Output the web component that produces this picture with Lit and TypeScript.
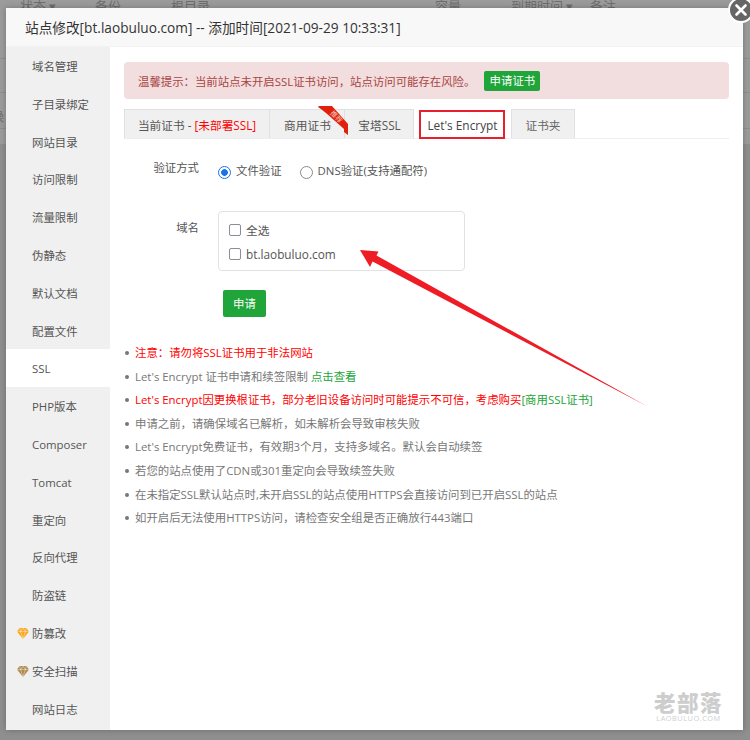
import { LitElement, html, css, svg } from "lit";
import { customElement } from "lit/decorators.js";

const MENU = ["域名管理","子目录绑定","网站目录","访问限制","流量限制","伪静态","默认文档","配置文件","SSL","PHP版本","Composer","Tomcat","重定向","反向代理","防盗链","防篡改","安全扫描","网站日志"];

const gem = (color: string) => html`<svg class="gem" viewBox="0 0 12 11"><path d="M2.6 0h6.8L12 3.4 6 11 0 3.4z" fill=${color}/><path d="M0 3.6h12M3.6 3.6 6 10.6 8.4 3.6M2.8.2l.8 3.4L6 .2l2.4 3.4.8-3.4" fill="none" stroke="#fff" stroke-width=".6" opacity=".7"/></svg>`;

@customElement("app-root")
export class AppRoot extends LitElement {
  static styles = css`
    :host { display: block; width: 750px; height: 740px; position: relative; overflow: hidden; background: #8f8f8f;
      font-family: "Open Sans", "Noto Sans CJK SC", sans-serif; font-size: 11.4px; color: #555; }
    .bg { position: absolute; inset: 0; color: #6e6e6e; font-size: 13px; }
    .bg span { position: absolute; top: -3px; line-height: 18px; }
    .bg i { position: absolute; left: 0; right: 0; height: 1px; background: #8e8e8e; }
    .bg .top { position: absolute; left: 0; right: 0; top: 0; height: 145px; background: #9b9b9b; }
    .dialog { position: absolute; left: 6px; top: 8px; width: 737px; height: 722px; background: #fff; display: flex; flex-direction: column; box-shadow: 0 0 6px rgba(0,0,0,.25); }
    .title { height: 39px; flex: none; background: #f8f8f8; padding-left: 19px; font-size: 13.66px; line-height: 40px; color: #333; border-bottom: 1px solid #f2f2f2; box-sizing: border-box; white-space: nowrap; }
    .close { position: absolute; left: 722px; top: -11px; width: 26px; height: 26px; box-sizing: border-box; border-radius: 50%; background: #666; border: 2px solid #fff; display: flex; }
    .close svg { width: 22px; height: 22px; }
    .body { flex: 1; display: flex; min-height: 0; }
    .side { width: 104px; flex: none; background: #f0f0f0; color: #555; }
    .item { height: 37.8px; line-height: 39.5px; padding-left: 26px; position: relative; }
    .item.on { background: #fff; }
    .gem { position: absolute; left: 11px; top: 14px; width: 12px; height: 11px; }
    .main { flex: 1; padding: 15px 14px 0; position: relative; min-width: 0; }
    .alert { height: 37px; background: #f2dede; border-radius: 4px; color: #a94442; display: flex; align-items: center; padding-left: 14px; box-sizing: border-box; }
    .alert b { font-weight: 400; background: #20a53a; color: #fff; border-radius: 2px; height: 20px; line-height: 20px; width: 56px; text-align: center; margin-left: 9px; }
    .tabs { display: flex; height: 30px; margin-top: 10px; border-bottom: 1.5px solid #eee; box-sizing: border-box; position: relative; }
    .tab { box-sizing: border-box; height: 29px; background: #f0f0f0; border: 1px solid #dde0e6; border-bottom: none; border-left-width: 0; text-align: center; line-height: 31px; color: #555; flex: none; position: relative; font-size: 11.7px; white-space: nowrap; }
    .tab em { font-style: normal; color: #f00; }
    .t1 { width: 146px; border-left-width: 1px; }
    .t2 { width: 75px; padding-left: 1px; }
    .t3 { width: 69px; padding-left: 1px; }
    .t4 { width: 86px; height: 29px; margin: 1px 6px 0 5px; padding-left: 1px; background: #fff; border: 2px solid #e8202e; color: #444; line-height: 26px; font-size: 11.85px; }
    .t5 { width: 64px; border-left-width: 1px; color: #666; }
    .ribbon { position: absolute; left: 194px; top: -3px; width: 31px; height: 30px; }
    .ribbon-text { position: absolute; left: 200px; top: 3px; width: 24px; line-height: 10px; text-align: center; font-size: 7px; color: #f6c9b8; transform: rotate(45deg); }
    .row { display: flex; }
    .lab { width: 75px; text-align: right; flex: none; color: #555; }
    .verify { margin-top: 20px; height: 22px; align-items: flex-start; line-height: 17px; }
    .radios { display: flex; margin-left: 19px; margin-top: 1px; line-height: 19px; align-items: center; height: 21px; }
    .radio { width: 13px; height: 13px; box-sizing: border-box; border-radius: 50%; border: 1.5px solid #8a8a8a; background: #fff; margin-right: 5px; flex: none; margin-top: 3px; }
    .radio.on { border-color: #1a73e8; background: radial-gradient(circle, #1a73e8 0 3px, #fff 3.7px); }
    .r2 { margin-left: 18px; }
    .domain { margin-top: 30px; align-items: flex-start; }
    .domain .lab { padding-top: 8px; line-height: 17px; }
    .box { width: 247px; height: 60px; margin-left: 19px; box-sizing: border-box; border: 1px solid #e2e2e2; border-radius: 4px; padding: 5px 0 0 10px; font-size: 11.8px; }
    .chk { display: flex; height: 24.5px; align-items: center; }
    .chk i { width: 12px; height: 12px; box-sizing: border-box; border: 1.5px solid #8c8c96; border-radius: 2px; margin-right: 5px; margin-top: 1px; flex: none; }
    .apply { display: block; margin: 19px 0 0 99px; width: 43px; height: 27px; background: #20a53a; color: #fff; border-radius: 2px; text-align: center; line-height: 27px; }
    ul { list-style: none; margin: 24px 0 0; padding: 0; }
    li { height: 23.62px; line-height: 23.62px; padding-left: 11px; position: relative; color: #777; white-space: nowrap; }
    li::before { content: ""; position: absolute; left: 1px; top: 10px; width: 4px; height: 4px; border-radius: 50%; background: #777; }
    .red { color: #f00; }
    .grn { color: #20a53a; }
    .arrow { position: absolute; left: 0; top: 0; width: 750px; height: 740px; pointer-events: none; }
    .mark { position: absolute; left: 654px; top: 691px; width: 69px; text-align: center; color: #cdcdcd; }
    .mark div { font-size: 21.5px; font-weight: 900; line-height: 23px; white-space: nowrap; letter-spacing: 1.5px; }
    .mark span { display: block; font-size: 7.4px; line-height: 9px; letter-spacing: .5px; color: #cfcfcf; white-space: nowrap; }
  `;

  render() {
    return html`
      <div class="bg">
        <div class="top"></div>
        <span style="left:20px">状态 ▾</span><span style="left:95px">备份</span><span style="left:171px">根目录</span>
        <span style="left:435px">容量</span><span style="left:511px">到期时间 ▾</span><span style="left:590px">备注</span>
        <span style="left:-9px;top:107px">操</span>
        <i style="top:58px"></i><i style="top:92px"></i><i style="top:128px"></i><i style="top:144px"></i>
      </div>
      <div class="dialog">
        <div class="title">站点修改[bt.laobuluo.com] -- 添加时间[2021-09-29 10:33:31]</div>
        <div class="close"><svg viewBox="0 0 22 22"><path d="M6.5 6.5l9 9M15.5 6.5l-9 9" stroke="#fff" stroke-width="2.6" stroke-linecap="round"/></svg></div>
        <div class="body">
          <div class="side">
            ${MENU.map((m) => html`<div class="item ${m === "SSL" ? "on" : ""}">${m === "防篡改" ? gem("#f9a61a") : m === "安全扫描" ? gem("#ad8a4c") : ""}${m}</div>`)}
          </div>
          <div class="main">
            <div class="alert">温馨提示：当前站点未开启SSL证书访问，站点访问可能存在风险。<b>申请证书</b></div>
            <div class="tabs">
              <div class="tab t1">当前证书 - <em>[未部署SSL]</em></div>
              <div class="tab t2">商用证书</div>
              <div class="tab t3">宝塔SSL</div>
              <div class="tab t4">Let's Encrypt</div>
              <div class="tab t5">证书夹</div>
              <svg class="ribbon" viewBox="0 0 31 30"><path d="M0 1Q0 0 2 0H14L30 18V29L26 26V23L8 7Q3 3 0 1z" fill="#e0200c"/></svg>
              <div class="ribbon-text">推荐</div>
            </div>
            <div class="row verify">
              <div class="lab">验证方式</div>
              <div class="radios"><span class="radio on"></span>文件验证<span class="radio r2"></span>DNS验证(支持通配符)</div>
            </div>
            <div class="row domain">
              <div class="lab">域名</div>
              <div class="box">
                <div class="chk"><i></i>全选</div>
                <div class="chk"><i></i>bt.laobuluo.com</div>
              </div>
            </div>
            <div class="apply">申请</div>
            <ul>
              <li class="red">注意：请勿将SSL证书用于非法网站</li>
              <li>Let's Encrypt 证书申请和续签限制 <span class="grn">点击查看</span></li>
              <li class="red">Let's Encrypt因更换根证书，部分老旧设备访问时可能提示不可信，考虑购买<span class="grn">[商用SSL证书]</span></li>
              <li>申请之前，请确保域名已解析，如未解析会导致审核失败</li>
              <li>Let's Encrypt免费证书，有效期3个月，支持多域名。默认会自动续签</li>
              <li>若您的站点使用了CDN或301重定向会导致续签失败</li>
              <li>在未指定SSL默认站点时,未开启SSL的站点使用HTTPS会直接访问到已开启SSL的站点</li>
              <li>如开启后无法使用HTTPS访问，请检查安全组是否正确放行443端口</li>
            </ul>
          </div>
        </div>
      </div>
      <svg class="arrow" viewBox="0 0 750 740">${svg`<path d="M360 250 378.5 251.5 376.5 255.5 647.5 406.5 372.5 261.5 370 267z" fill="#ee1c25"/>`}</svg>
      <div class="mark"><div>老部落</div><span>LAOBULUO.COM</span></div>
    `;
  }
}
